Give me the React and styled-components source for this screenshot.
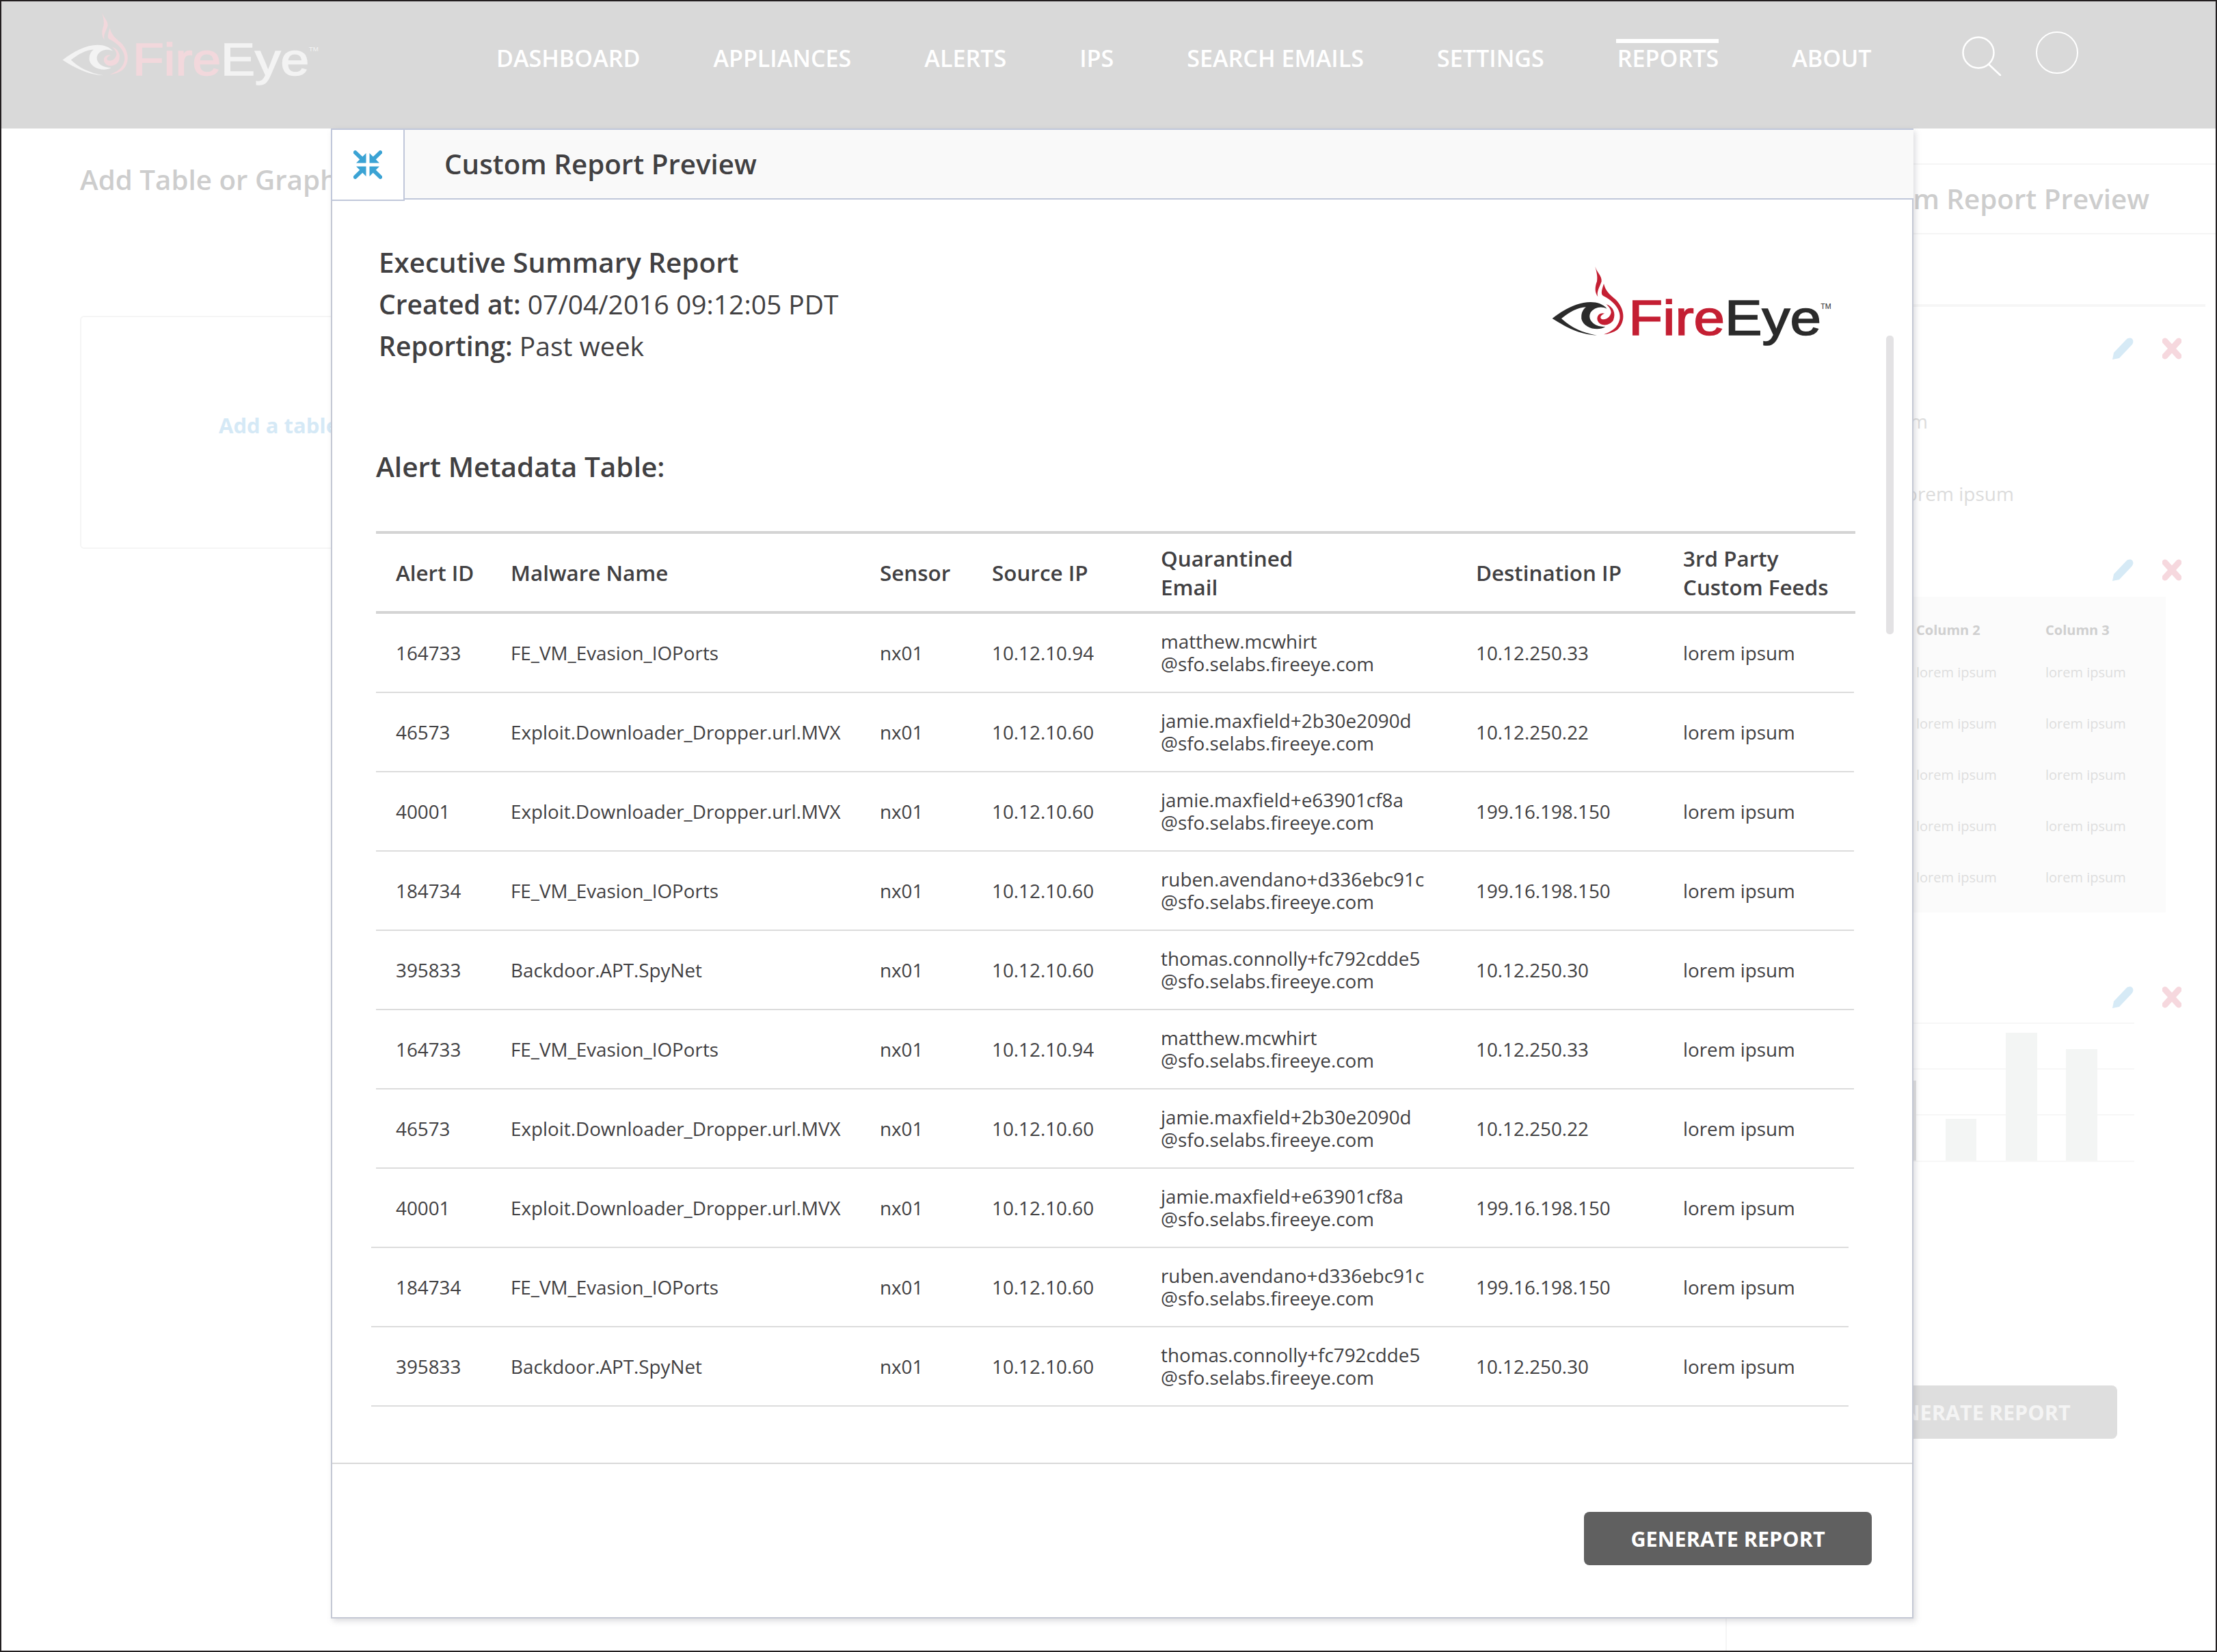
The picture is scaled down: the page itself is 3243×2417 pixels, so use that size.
import React from 'react'
import styled, { createGlobalStyle } from 'styled-components'

const Global = createGlobalStyle`
  html, body { margin: 0; padding: 0; background: #fff; }
  * { box-sizing: border-box; }
  body { font-family: "Open Sans", "Liberation Sans", sans-serif; color: #414042; }
`

const Frame = styled.div`
  position: relative;
  width: 3243px;
  height: 2417px;
  border: 2px solid #231f20;
  overflow: hidden;
  background: #fff;
`

const Header = styled.header`
  display: flex;
  align-items: flex-start;
  height: 186px;
  background: #d9d9d9;
`

const BrandSvg = styled.svg`
  flex: none;
  align-self: flex-start;
  display: block;
  width: ${p => p.$width}px;
  margin: ${p => p.$margin};
`

const FireEyeLogo = ({ red, dark, width, margin }) => (
  <BrandSvg viewBox="150 60 1230 350" $width={width} $margin={margin}>
    <path fill={dark} d="M152 288C200 250 260 216 320 216C350 216 375 225 392 245C365 232 335 240 320 262C305 290 330 325 385 325C350 345 290 330 280 290C278 265 285 250 300 238C260 240 225 262 192 288C230 325 280 350 348 362C270 358 210 325 152 288Z" />
    <path fill={red} d="M340 60C350 90 370 100 368 125C360 150 345 170 352 192C338 175 338 150 348 125C352 100 345 80 340 60Z" />
    <path fill={red} d="M378 135C385 165 400 180 430 205C470 245 475 300 440 335C420 350 400 355 378 358C410 345 440 330 448 290C455 250 420 210 375 188C362 180 372 155 378 135Z" />
    <path fill={red} d="M388 225C420 235 432 265 420 295C405 322 360 325 350 295C345 272 365 260 382 266C368 270 358 282 368 290C385 296 405 285 410 262C410 248 400 235 388 225Z" />
    <text transform="translate(487 360) scale(1.135 1)" fontFamily="Liberation Sans, Arial, sans-serif" fontSize="216" strokeWidth="5">
      <tspan fill={red} stroke={red}>Fire</tspan>
      <tspan fill={dark} stroke={dark}>Eye</tspan>
    </text>
    <text x="1330" y="245" fill={dark} fontFamily="Liberation Sans, Arial, sans-serif" fontSize="32">TM</text>
  </BrandSvg>
)

const Nav = styled.nav`
  display: flex;
  gap: 107px;
  margin: 61px 0 0 259px;
  width: 2012px;
`

const NavLink = styled.a`
  position: relative;
  font-size: 34.1px;
  line-height: 44px;
  font-weight: 600;
  color: #fff;
  white-space: nowrap;
  &::before {
    content: '';
    display: ${p => (p.$active ? 'block' : 'none')};
    position: absolute;
    left: -2px;
    right: 0;
    top: -6px;
    height: 6px;
    background: #fff;
  }
`

const SearchSvg = styled.svg`
  flex: none;
  width: 58px;
  height: 58px;
  margin: 51px 0 0 132px;
`

const Avatar = styled.div`
  flex: none;
  width: 62px;
  height: 62px;
  margin: 44px 0 0 50px;
  border: 2px solid #fff;
  border-radius: 50%;
`

const Main = styled.main`
  display: flex;
  height: 2227px;
`

const LeftPanel = styled.section`
  flex: none;
  width: 2522px;
  padding: 45px 0 0 115px;
`

const PageTitle = styled.h2`
  margin: 0;
  font-size: 40.3px;
  line-height: 60px;
  font-weight: 600;
  color: #cdcdcd;
  white-space: nowrap;
`

const DropCard = styled.div`
  width: 600px;
  height: 341px;
  margin-top: 169px;
  padding: 0 0 22px 201px;
  display: flex;
  align-items: center;
  border: 2px solid #f5f5f5;
  border-radius: 6px;
  font-size: 31px;
  font-weight: 700;
  color: #d5e9f6;
  white-space: nowrap;
`

const RightPanel = styled.aside`
  flex: 1;
  min-width: 0;
  border-left: 2px solid #f5f5f5;
`

const PanelHead = styled.div`
  display: flex;
  align-items: center;
  justify-content: flex-end;
  height: 104px;
  margin-top: 51px;
  padding-right: 97px;
  border-top: 2px solid #f5f5f5;
  border-bottom: 2px solid #f5f5f5;
`

const Strip = styled.div`
  height: 4px;
  margin: 102px 15px 0 0;
  background: #f6f6f6;
`

const Actions = styled.div`
  display: flex;
  justify-content: flex-end;
  gap: 42px;
  height: 32px;
  margin-top: ${p => p.$top}px;
  padding-right: 50px;
`

const Field = styled.div`
  margin-top: ${p => p.$top}px;
  padding-left: ${p => p.$indent}px;
  font-size: 28px;
  line-height: 40px;
  color: #dcdcdc;
  white-space: nowrap;
`

const MiniTable = styled.div`
  display: grid;
  grid-template-columns: 187px 189px 1fr;
  grid-template-rows: 46px;
  grid-auto-rows: 75px;
  align-items: center;
  margin: 23px 73px 0 90px;
  padding: 27px 0 14px 0;
  background: #fbfbfb;
  font-size: 20px;
  color: #dedede;
`

const MiniHead = styled.div`
  line-height: 44px;
  align-self: start;
  font-weight: 700;
  color: #cfcfcf;
`

const ChartSvg = styled.svg`
  display: block;
  width: 498px;
  height: 204px;
  margin: 21px 0 0 98px;
`

const GhostButton = styled.div`
  display: flex;
  align-items: center;
  justify-content: center;
  width: 421px;
  height: 78px;
  margin: 327px 0 0 150px;
  border-radius: 8px;
  background: #dedede;
  color: #f4f4f4;
  font-size: 30.6px;
  font-weight: 700;
  white-space: nowrap;
`

const Modal = styled.div`
  position: absolute;
  left: 482px;
  top: 186px;
  width: 2315px;
  height: 2180px;
  display: flex;
  flex-direction: column;
  background: #fff;
  border-left: 2px solid #c4c8d4;
  border-right: 2px solid #c4c8d4;
  border-bottom: 2px solid #c4c8d4;
  box-shadow: 3px 4px 8px rgba(120, 120, 130, 0.25);
`

const TitleBar = styled.div`
  position: relative;
  display: flex;
  align-items: center;
  flex: none;
  height: 104px;
  margin: 0 -2px;
  padding-left: 166px;
  background: #f9f9f9;
  border-top: 2px solid #c0c7da;
  border-bottom: 2px solid #c0c7da;
`

const ToggleBox = styled.button`
  position: absolute;
  left: 0;
  top: -2px;
  display: flex;
  align-items: center;
  justify-content: center;
  width: 108px;
  height: 106px;
  padding: 0;
  background: #fff;
  border: 2px solid #c0c7da;
`

const ModalTitle = styled.h1`
  margin: 0;
  font-size: 40.3px;
  line-height: 60px;
  font-weight: 600;
  color: #414042;
  white-space: nowrap;
`

const Body = styled.div`
  position: relative;
  flex: 1;
  padding: 61px 0 0 64px;
`

const Scroll = styled.div`
  position: absolute;
  left: 2273px;
  top: 199px;
  width: 11px;
  height: 437px;
  border-radius: 5px;
  background: #e3e2e4;
`

const SummaryRow = styled.div`
  display: flex;
  justify-content: space-between;
  height: 180px;
  width: 2130px;
  padding-left: 4px;
`

const Summary = styled.div`
  font-size: 39px;
  line-height: 61px;
  color: #414042;
`

const SummaryTitle = styled.div`
  font-size: 40.4px;
  font-weight: 600;
`

const Strong = styled.span`
  font-weight: 600;
`

const SectionTitle = styled.h3`
  margin: 120px 0 64px;
  font-size: 40.6px;
  line-height: 60px;
  font-weight: 600;
  color: #414042;
`

const Table = styled.div`
  width: 2164px;
`

const columns = '168px 540px 164px 247px 461px 303px 1fr'

const TableHead = styled.div`
  display: grid;
  grid-template-columns: ${columns};
  align-items: center;
  height: 121px;
  padding-left: 29px;
  border-top: 4px solid #d4d4d4;
  border-bottom: 4px solid #d4d4d4;
  font-size: 31.4px;
  line-height: 42px;
  font-weight: 600;
  color: #414042;
`

const TableRow = styled.div`
  display: grid;
  grid-template-columns: ${columns};
  align-items: center;
  height: 116px;
  margin: ${p => (p.$shift ? '0 10px 0 -7px' : '0 2px 0 0')};
  padding-left: ${p => (p.$shift ? 36 : 29)}px;
  border-bottom: 2px solid #dcdcdc;
  font-size: 27.8px;
  color: #414042;
`

const Email = styled.div`
  line-height: 33px;
  white-space: nowrap;
`

const Footer = styled.div`
  flex: none;
  display: flex;
  justify-content: flex-end;
  align-items: flex-start;
  height: 226px;
  padding: 70px 59px 0 0;
  border-top: 2px solid #d9d9d9;
`

const GenerateButton = styled.button`
  width: 421px;
  height: 78px;
  border: 0;
  border-radius: 8px;
  background: #606060;
  color: #fff;
  font-family: inherit;
  font-size: 30.6px;
  font-weight: 700;
  white-space: nowrap;
`

const ActionSvg = styled.svg`
  display: block;
  flex: none;
`

const PencilIcon = () => (
  <ActionSvg width="31" height="32" viewBox="0 0 31 32">
    <path fill="#d6eaf6" d="M0 32L2 22L20 3C23 0 27 0 29 2C31 4 31 8 28 11L10 30Z" />
  </ActionSvg>
)

const CrossIcon = () => (
  <ActionSvg width="28" height="32" viewBox="0 0 28 32">
    <path stroke="#f6d8de" strokeWidth="9" strokeLinecap="round" fill="none" d="M4 5L24 27M24 5L4 27" />
  </ActionSvg>
)

const CollapseCorner = ({ transform }) => (
  <g transform={transform}>
    <path d="M55 10V53H12Z" />
    <path d="M36 34L8 7" stroke="#3ba3d4" strokeWidth="17" strokeLinecap="round" fill="none" />
  </g>
)

const CollapseIcon = () => (
  <svg width="42" height="42" viewBox="0 0 125 121" fill="#3ba3d4">
    <CollapseCorner />
    <CollapseCorner transform="translate(125,0) scale(-1,1)" />
    <CollapseCorner transform="translate(0,121) scale(1,-1)" />
    <CollapseCorner transform="translate(125,121) scale(-1,-1)" />
  </svg>
)

const navItems = ['DASHBOARD', 'APPLIANCES', 'ALERTS', 'IPS', 'SEARCH EMAILS', 'SETTINGS', 'REPORTS', 'ABOUT']

const sfo = '@sfo.selabs.fireeye.com'
const baseRows = [
  ['164733', 'FE_VM_Evasion_IOPorts', '10.12.10.94', 'matthew.mcwhirt', '10.12.250.33'],
  ['46573', 'Exploit.Downloader_Dropper.url.MVX', '10.12.10.60', 'jamie.maxfield+2b30e2090d', '10.12.250.22'],
  ['40001', 'Exploit.Downloader_Dropper.url.MVX', '10.12.10.60', 'jamie.maxfield+e63901cf8a', '199.16.198.150'],
  ['184734', 'FE_VM_Evasion_IOPorts', '10.12.10.60', 'ruben.avendano+d336ebc91c', '199.16.198.150'],
  ['395833', 'Backdoor.APT.SpyNet', '10.12.10.60', 'thomas.connolly+fc792cdde5', '10.12.250.30'],
]
const rows = [...baseRows, ...baseRows]

const App = () => (
  <Frame>
    <Global />
    <Header>
      <FireEyeLogo red="#f2d8dc" dark="#f3f3f3" width={376} margin="16px 0 0 89px" />
      <Nav>
        {navItems.map(item => (
          <NavLink key={item} $active={item === 'REPORTS'}>{item}</NavLink>
        ))}
      </Nav>
      <SearchSvg viewBox="0 0 58 58" fill="none" stroke="#fff" strokeWidth="2.5">
        <circle cx="24" cy="24" r="22.5" />
        <path d="M39 41L56 57" strokeLinecap="round" />
      </SearchSvg>
      <Avatar />
    </Header>

    <Main>
      <LeftPanel>
        <PageTitle>Add Table or Graph</PageTitle>
        <DropCard>Add a table or graph</DropCard>
      </LeftPanel>
      <RightPanel>
        <PanelHead>
          <PageTitle>Custom Report Preview</PageTitle>
        </PanelHead>
        <Strip />
        <Actions $top={45}><PencilIcon /><CrossIcon /></Actions>
        <Field $top={70} $indent={129}>lorem ipsum</Field>
        <Field $top={66} $indent={255}>lorem ipsum</Field>
        <Actions $top={76}><PencilIcon /><CrossIcon /></Actions>
        <MiniTable>
          <MiniHead>Column 1</MiniHead>
          <MiniHead>Column 2</MiniHead>
          <MiniHead>Column 3</MiniHead>
          {Array.from({ length: 15 }).map((_, i) => (
            <div key={i}>lorem ipsum</div>
          ))}
        </MiniTable>
        <Actions $top={108}><PencilIcon /><CrossIcon /></Actions>
        <ChartSvg viewBox="0 0 498 204">
          <g stroke="#f7f7f7" strokeWidth="2">
            <path d="M0 1H498M0 68H498M0 135H498M0 203H498" />
          </g>
          <rect x="133" y="85" width="46" height="117" fill="#e4e4e4" />
          <rect x="222" y="141" width="45" height="61" fill="#f3f5f4" />
          <rect x="310" y="15" width="46" height="187" fill="#f3f5f4" />
          <rect x="398" y="39" width="46" height="163" fill="#f3f5f4" />
        </ChartSvg>
        <GhostButton>GENERATE REPORT</GhostButton>
      </RightPanel>
    </Main>

    <Modal>
      <TitleBar>
        <ToggleBox><CollapseIcon /></ToggleBox>
        <ModalTitle>Custom Report Preview</ModalTitle>
      </TitleBar>
      <Body>
        <Scroll />
        <SummaryRow>
          <Summary>
            <SummaryTitle>Executive Summary Report</SummaryTitle>
            <div><Strong>Created at:</Strong> 07/04/2016 09:12:05 PDT</div>
            <div><Strong>Reporting:</Strong> Past week</div>
          </Summary>
          <FireEyeLogo red="#c41f33" dark="#2b2b2b" width={410} margin="37px 0 0 0" />
        </SummaryRow>
        <SectionTitle>Alert Metadata Table:</SectionTitle>
        <Table>
          <TableHead>
            <div>Alert ID</div>
            <div>Malware Name</div>
            <div>Sensor</div>
            <div>Source IP</div>
            <div>Quarantined<br />Email</div>
            <div>Destination IP</div>
            <div>3rd Party<br />Custom Feeds</div>
          </TableHead>
          {rows.map((r, i) => (
            <TableRow key={i} $shift={i >= 7}>
              <div>{r[0]}</div>
              <div>{r[1]}</div>
              <div>nx01</div>
              <div>{r[2]}</div>
              <Email>{r[3]}<br />{sfo}</Email>
              <div>{r[4]}</div>
              <div>lorem ipsum</div>
            </TableRow>
          ))}
        </Table>
      </Body>
      <Footer>
        <GenerateButton>GENERATE REPORT</GenerateButton>
      </Footer>
    </Modal>
  </Frame>
)

export default App
